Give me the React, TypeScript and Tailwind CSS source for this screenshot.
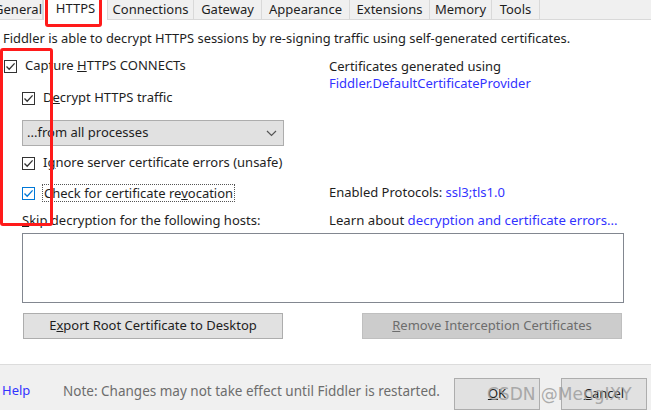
import { ReactNode } from "react";

const font = { fontFamily: '"Noto Sans", "Open Sans", sans-serif' };

const Check = ({ blue }: { blue?: boolean }) => (
    <span
        className={`flex h-[13px] w-[13px] shrink-0 items-center justify-center border bg-white ${
            blue ? "border-[#0078d7]" : "border-[#333333]"
        }`}
    >
        <svg width="11" height="11" viewBox="0 0 11 11">
            <path
                d="M1.5 5.5 L4.2 8.3 L9.6 2.4"
                fill="none"
                stroke={blue ? "#0078d7" : "#333333"}
                strokeWidth="1.3"
            />
        </svg>
    </span>
);

const Row = ({ children, className }: { children: ReactNode; className?: string }) => (
    <div className={`flex h-[20px] items-center whitespace-nowrap ${className ?? ""}`}>{children}</div>
);

const tabs = [
    { name: "Connections", w: "w-[86px]" },
    { name: "Gateway", w: "w-[68px]" },
    { name: "Appearance", w: "w-[88px]" },
    { name: "Extensions", w: "w-[80px]" },
    { name: "Memory", w: "w-[62px]" },
    { name: "Tools", w: "w-[48px]" },
];

export default function App() {
    return (
        <div
            className="relative flex h-[410px] w-[651px] flex-col overflow-hidden bg-white text-[13px] text-[#1e1e1e]"
            style={font}
        >
            {/* tab strip */}
            <div className="flex h-[20px] shrink-0 items-end border-b border-[#d9d9d9] bg-[#f0f0f0]">
                <div className="flex h-[19px] w-[43px] items-center justify-end overflow-hidden border-r border-[#d9d9d9]">
                    General
                </div>
                <div className="-mb-px flex h-[21px] w-[65px] items-start justify-center border-x border-[#d9d9d9] bg-white">
                    HTTPS
                </div>
                {tabs.map((t) => (
                    <div
                        key={t.name}
                        className={`flex h-[19px] ${t.w} items-center justify-center border-r border-[#d9d9d9]`}
                    >
                        {t.name}
                    </div>
                ))}
            </div>

            <div className="ml-[3px] mt-[9px] h-[18px] whitespace-nowrap text-[12.9px] leading-[18px]">
                Fiddler is able to decrypt HTTPS sessions by re-signing traffic using self-generated certificates.
            </div>

            <div className="mt-[9px] flex">
                <div className="flex w-[329px] flex-col">
                    <Row className="gap-[8px] pl-[4px]">
                        <Check />
                        <span>
                            Capture <u>H</u>TTPS CONNECTs
                        </span>
                    </Row>
                    <Row className="mt-[12px] gap-[8px] pl-[22px]">
                        <Check />
                        <span>
                            D<u>e</u>crypt HTTPS traffic
                        </span>
                    </Row>
                    <div className="ml-[22px] mt-[12px] flex h-[26px] w-[262px] items-center justify-between border border-[#adadad] bg-[#e1e1e1] pl-[4px] pr-[6px]">
                        <span>...from all processes</span>
                        <svg width="11" height="7" viewBox="0 0 11 7">
                            <path d="M1 1 L5.5 5.5 L10 1" fill="none" stroke="#555555" strokeWidth="1.2" />
                        </svg>
                    </div>
                    <Row className="mt-[7px] gap-[8px] pl-[22px]">
                        <Check />
                        <span>
                            I<u>g</u>nore server certificate errors (unsafe)
                        </span>
                    </Row>
                </div>
                <div className="flex flex-col whitespace-nowrap pt-px">
                    <div className="h-[18px] leading-[18px]">Certificates generated using</div>
                    <div className="h-[17px] leading-[17px] text-[#3333ff]">Fiddler.DefaultCertificateProvider</div>
                </div>
            </div>

            <div className="mt-[10px] flex">
                <Row className="w-[329px] gap-[7px] pl-[22px]">
                    <Check blue />
                    <span className="border border-dotted border-[#555555] px-px leading-[16px]">
                        Check for certificate re<u>v</u>ocation
                    </span>
                </Row>
                <Row>
                    Enabled Protocols:&nbsp;<span className="text-[#3333ff]">ssl3;tls1.0</span>
                </Row>
            </div>

            <div className="mt-[8px] flex">
                <Row className="w-[329px] pl-[22px]">
                    <span>
                        <u>S</u>kip decryption for the following hosts:
                    </span>
                </Row>
                <Row className="text-[13.2px]">
                    Learn about&nbsp;<span className="text-[#3333ff]">decryption and certificate errors...</span>
                </Row>
            </div>

            <div className="ml-[22px] mt-[2px] h-[74px] w-[602px] border border-[#828790] bg-white" />

            <div className="mt-[10px] flex">
                <button className="ml-[23px] flex h-[26px] w-[260px] items-center justify-center border border-[#adadad] bg-[#e1e1e1]">
                    <span>
                        E<u>x</u>port Root Certificate to Desktop
                    </span>
                </button>
                <button className="ml-[79px] flex h-[26px] w-[260px] items-center justify-center border border-[#bfbfbf] bg-[#cccccc] text-[#6d6d6d]">
                    <span>
                        <u>R</u>emove Interception Certificates
                    </span>
                </button>
            </div>

            {/* footer */}
            <div className="mt-[25px] flex flex-1 items-start border-t border-[#dcdcdc] bg-[#f0f0f0] pt-[13px]">
                <div className="ml-[2px] flex h-[26px] w-[61px] items-center text-[#3333ff]">Help</div>
                <div className="flex h-[26px] w-[391px] items-center whitespace-nowrap text-[13.5px] text-[#6d6d6d]">
                    Note: Changes may not take effect until Fiddler is restarted.
                </div>
                <button className="flex h-[32px] w-[86px] items-center justify-center border border-[#adadad] bg-[#e1e1e1]">
                    <u>O</u>K
                </button>
                <button className="ml-[21px] flex h-[32px] w-[86px] items-center justify-center border border-[#adadad] bg-[#e1e1e1]">
                    <span>
                        <u>C</u>ancel
                    </span>
                </button>
            </div>

            {/* annotations */}
            <div className="pointer-events-none absolute left-[45px] top-[-4px] h-[31px] w-[57px] rounded-[3px] border-[3px] border-[#ff1a1a]" />
            <div className="pointer-events-none absolute left-0 top-[48px] h-[178px] w-[53px] rounded-[3px] border-[3px] border-[#ff1a1a]" />
            <div
                className="pointer-events-none absolute left-[487px] top-[382px] text-[17px] text-[#9a9a9a] opacity-80"
                style={{ fontFamily: '"DejaVu Sans", sans-serif' }}
            >
                CSDN @MengIXY
            </div>
        </div>
    );
}
